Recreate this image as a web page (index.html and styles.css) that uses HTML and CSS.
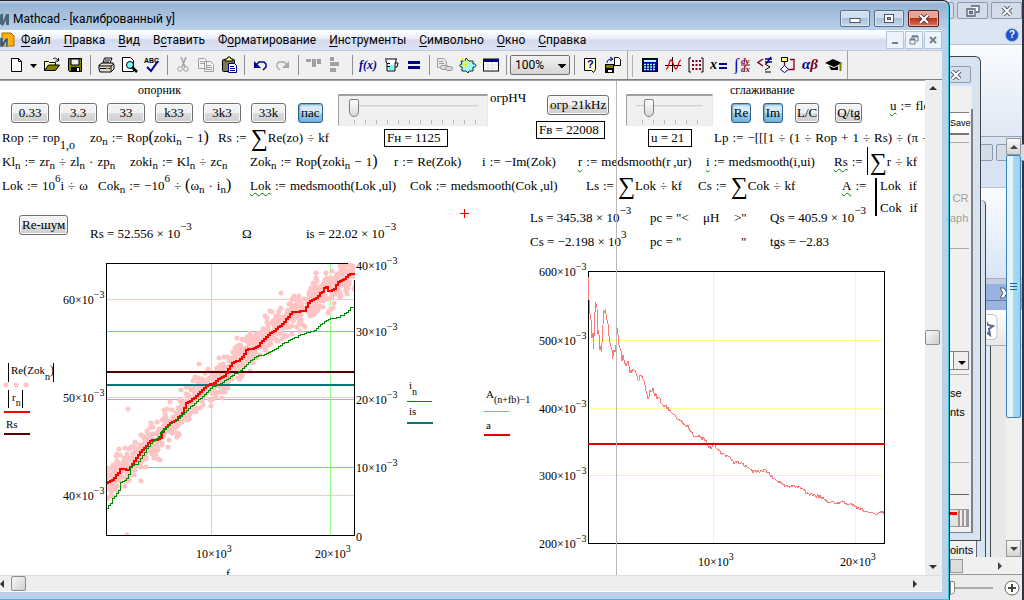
FILE: index.html
```html
<!DOCTYPE html>
<html lang="ru">
<head>
<meta charset="utf-8">
<title>Mathcad - [калиброванный y]</title>
<link rel="stylesheet" href="styles.css">
</head>
<body>
<div class="desktop">

  <section class="office" aria-label="Office">
    <div class="office-caption">
      <button class="glass-btn cut-left" aria-label="Свернуть"></button>
      <button class="glass-btn" aria-label="Восстановить"><svg width="14" height="12" viewBox="0 0 14 12"><path d="M5 1h8v6h-3M1 4h8v7H1zM3.500 6.500h3v2h-3z" fill="#fff" stroke="#555f70" stroke-width="1.300"/></svg></button>
      <button class="glass-btn" aria-label="Закрыть"><svg width="12" height="10" viewBox="0 0 12 10"><path d="M2 1l8 8M10 1l-8 8" stroke="#555f70" stroke-width="4"/><path d="M2 1l8 8M10 1l-8 8" stroke="#fff" stroke-width="2"/></svg></button>
    </div>
    <div class="office-ribbon"><button class="help-ball" aria-label="Справка">?</button></div>
    <div class="office-body"></div>
    <div class="office-mid">
      <button class="glass-btn" aria-label="Окно"></button><button class="glass-btn" aria-label="Закрыть документ"></button>
    </div>
    <div class="office-blue">
      <svg width="10" height="12" viewBox="0 0 10 12"><path d="M1 1h4l3 5-3 5H1l3-5z" fill="#fff" stroke="#4d5c78"/></svg>
    </div>
    <div class="office-star"><svg width="11" height="26" viewBox="0 0 11 26"><rect x="-8" y=".5" width="18" height="25" rx="4" fill="#fff" stroke="#c0c4c8"/><path d="M-1 7l2 4 5 1-4 3 1 6-4-3" fill="#fff" stroke="#5b6b8a" stroke-width="2"/></svg></div>
    <div class="office-page"></div>
    <div class="office-scroll">
      <button class="classic-arrow" aria-label="Вверх"><svg width="8" height="4" viewBox="0 0 8 4"><path d="M0 4l4-4 4 4z" fill="#444"/></svg></button>
      <div class="office-thumb"><i></i><i></i><i></i></div>
      <div class="office-track"></div>
      <button class="classic-arrow" aria-label="Вниз"><svg width="8" height="4" viewBox="0 0 8 4"><path d="M0 0h8L4 4z" fill="#444"/></svg></button>
    </div>
    <div class="office-hscroll"><span class="hthumb"></span><svg width="4" height="8" viewBox="0 0 4 8"><path d="M0 0l4 4-4 4z" fill="#444"/></svg></div>
    <div class="office-status"><span class="zoom-thumb"></span><span class="zoom-line"></span>
      <button class="zoom-in" aria-label="Увеличить"><svg width="16" height="16" viewBox="0 0 16 16"><circle cx="8" cy="8" r="7" fill="#fff" stroke="#666"/><path d="M4 8h8M8 4v8" stroke="#444" stroke-width="2"/></svg></button></div>
  </section>

  <section class="back-window" aria-label="Points"><span>oints</span></section>

  <section class="dialog" aria-label="Параметры">
    <button class="glass-btn dialog-close" aria-label="Закрыть"><svg width="12" height="10" viewBox="0 0 12 10"><path d="M2 1l8 8M10 1l-8 8" stroke="#555f70" stroke-width="4"/><path d="M2 1l8 8M10 1l-8 8" stroke="#fff" stroke-width="2"/></svg></button>
    <div class="dialog-top"></div>
    <div class="dialog-body">
      <button class="save">Save</button>
      <div class="faded"><span>CR</span><span>aph</span></div>
      <button class="drop" aria-label="Список"><svg width="8" height="4" viewBox="0 0 8 4"><path d="M0 0h8L4 4z"/></svg></button>
      <div class="opts"><span>se</span><span>nts</span></div>
      <div class="group"></div>
      <div class="swatch"></div>
    </div>
  </section>

  <main class="app">
    <header class="titlebar">
      <svg class="logo" width="10" height="16" viewBox="0 0 10 16"><path d="M0 13V4l3-2v8l3-7h3v11H6V9l-3 6z" fill="#4a6478"/></svg>
      <h1>Mathcad - [калиброванный y]</h1>
      <div class="caption-buttons">
        <button aria-label="Свернуть"><svg width="14" height="10" viewBox="0 0 14 10"><rect x="2" y="4.500" width="10" height="4" fill="#fff" stroke="#4b5768"/></svg></button>
        <button aria-label="Развернуть"><svg width="14" height="10" viewBox="0 0 14 10"><rect x="2.500" y=".5" width="9" height="8" fill="#fff" stroke="#4b5768"/><rect x="5.500" y="3.500" width="3" height="2" fill="#9ab" stroke="#4b5768"/></svg></button>
        <button class="close" aria-label="Закрыть"><svg width="14" height="10" viewBox="0 0 14 10"><path d="M3 1l8 8M11 1l-8 8" stroke="#5b2f2f" stroke-width="4"/><path d="M3 1l8 8M11 1l-8 8" stroke="#fff" stroke-width="2.200"/></svg></button>
      </div>
    </header>

    <nav class="menubar">
      <svg class="doc" width="15" height="16" viewBox="0 0 15 16"><path d="M2 1h9l3 3v10H2z" fill="#ffb400" stroke="#a86500"/><path d="M0 15V6l3-1v5l3-4h2v9H6v-5l-3 5z" fill="#3d566c" stroke="#b9c8d4" stroke-width=".5"/></svg>
      <a href="#"><u>Ф</u>айл</a><a href="#"><u>П</u>равка</a><a href="#"><u>В</u>ид</a><a href="#">В<u>с</u>тавить</a><a href="#">Ф<u>о</u>рматирование</a><a href="#"><u>И</u>нструменты</a><a href="#"><u>С</u>имвольно</a><a href="#"><u>О</u>кно</a><a href="#"><u>С</u>правка</a>
      <div class="mdi-buttons">
        <button aria-label="Свернуть документ"><svg width="10" height="10" viewBox="0 0 10 10"><path d="M2 8h6" stroke="#6f8294" stroke-width="2"/></svg></button>
        <button aria-label="Восстановить документ"><svg width="10" height="10" viewBox="0 0 10 10"><path d="M3 3V1h6v5H7M1 4h5v5H1z" fill="none" stroke="#6f8294"/><path d="M3 1.500h6M1 4.500h5" stroke="#6f8294" stroke-width="2"/></svg></button>
        <button aria-label="Закрыть документ"><svg width="10" height="10" viewBox="0 0 10 10"><path d="M2 2l6 6M8 2L2 8" stroke="#6f8294" stroke-width="2"/></svg></button>
      </div>
    </nav>

    <div class="toolbar">
      <button aria-label="Создать"><svg viewBox="0 0 18 18"><path d="M4.500 2.500h7l3 3v10h-10zM11.500 2.500v3h3" fill="#fff" stroke="#000"/></svg></button>
      <button class="narrow" aria-label="Шаблоны"><svg viewBox="0 0 8 18"><path d="M0 8h7L3.500 12z"/></svg></button>
      <button aria-label="Открыть"><svg viewBox="0 0 18 18"><path d="M1.500 14V5.500h4l1 1h6V9" fill="#ffff9c" stroke="#000"/><path d="M1.500 14.500l4-5.500h11l-4 5.500z" fill="#808000" stroke="#000"/><path d="M10 3c2-1.500 4-1 5 1.500M15.500 2v3h-3" fill="none" stroke="#000"/></svg></button>
      <button aria-label="Сохранить"><svg viewBox="0 0 18 18"><path d="M2.500 2.500h13v13h-12l-1-1z" fill="#808000" stroke="#000"/><path d="M5 3h8v6H5z" fill="#f0f0f0" stroke="#000"/><path d="M5 11h9v5H5z"/><path d="M11 12h2v3h-2z" fill="#fff"/></svg></button>
      <i class="sep"></i>
      <button aria-label="Печать"><svg viewBox="0 0 18 18"><path d="M6 7l1.500-5H15l-2 5" fill="#fff" stroke="#000"/><path d="M8 4h5M7 6h5" stroke="#000"/><path d="M2 9l3-2h11l1 2v4l-3 3H3l-1-3z" fill="#ddd" stroke="#000"/><path d="M2 10h12l3-2M3 12.500h10M14 10v5" fill="none" stroke="#000"/><path d="M9 12h3" stroke="#fc0"/></svg></button>
      <button aria-label="Просмотр"><svg viewBox="0 0 18 18"><path d="M2.500 1.500h8l3 3v11h-11z" fill="#fff" stroke="#000"/><circle cx="10" cy="9" r="3.500" fill="#7ff" stroke="#000"/><path d="M12 11l5 5" stroke="#000" stroke-width="2.500"/></svg></button>
      <button aria-label="Орфография"><svg viewBox="0 0 18 18"><text x="1" y="7" class="abc">ABC</text><path d="M4 11l4 4 7-10" fill="none" stroke="#000090" stroke-width="2"/></svg></button>
      <i class="sep"></i>
      <button aria-label="Вырезать"><svg viewBox="0 0 18 18"><path d="M7 1l4 10M12 1L8 11" stroke="#a0a0a0" stroke-width="1.500"/><circle cx="6" cy="13" r="2.300" fill="none" stroke="#a0a0a0"/><circle cx="12" cy="13" r="2.300" fill="none" stroke="#a0a0a0"/></svg></button>
      <button aria-label="Копировать"><svg viewBox="0 0 18 18"><path d="M1.500 2.500h6l2 2v8h-8zM7.500 5.500h6l3 3v7h-9zM3 5.500h4M3 7.500h4M9 9.500h5M9 11.500h6M9 13.500h6" fill="#f4f4f4" stroke="#a0a0a0"/></svg></button>
      <button aria-label="Вставить"><svg viewBox="0 0 18 18"><rect x="2.500" y="3.500" width="12" height="12" rx="1" fill="#7c7c50" stroke="#000"/><path d="M5 5V3h2l1-2h2l1 2h2v2z" fill="#ff8" stroke="#000"/><path d="M8.500 7.500h6l2 2v7h-8zM10 10.500h4M10 12.500h5M10 14.500h5" fill="#fff" stroke="#000090"/></svg></button>
      <i class="sep"></i>
      <button aria-label="Отменить"><svg viewBox="0 0 18 18"><path d="M5 9l3-3h5l2 2v3l-3 3" fill="none" stroke="#000090" stroke-width="1.500"/><path d="M3 5v7h7z" fill="#000090"/></svg></button>
      <button aria-label="Повторить"><svg viewBox="0 0 18 18"><path d="M13 9l-3-3H5L3 8v3l3 3" fill="none" stroke="#a8a8a8" stroke-width="1.300"/><path d="M15 5v7H8z" fill="#a8a8a8"/></svg></button>
      <i class="sep"></i>
      <button aria-label="Выровнять поперёк"><svg viewBox="0 0 18 18"><path d="M1 3h5v3H1zM7 3h4v8H7zM12 3h4v5h-4z" fill="#a0a0a0"/></svg></button>
      <button aria-label="Выровнять вниз"><svg viewBox="0 0 18 18"><path d="M2 1h4v4H2zM2 6h9v4H2zM2 12h6v4H2z" fill="#a0a0a0"/></svg></button>
      <i class="sep"></i>
      <button aria-label="Функция"><svg viewBox="0 0 18 18"><text x="0" y="13" class="fx">f(x)</text></svg></button>
      <button aria-label="Единицы"><svg viewBox="0 0 18 18"><path d="M3 3h12M4 4v2l1 1v8h8V7l1-2V3M13 7h3l-1 4h-2" fill="#fff" stroke="#000"/><path d="M6 9h6v5H6z" fill="#7ff"/><path d="M5 7.500h3M5 10.500h3" stroke="#000"/></svg></button>
      <button aria-label="Вычислить"><svg viewBox="0 0 18 18"><path d="M3 5h12v3H3zM3 10h12v3H3z" fill="#000090"/></svg></button>
      <i class="sep"></i>
      <button aria-label="Гиперссылка"><svg viewBox="0 0 18 18"><path d="M1.500 2.500h6l3 3v6h-9zM3 5.500h4M3 7.500h5" fill="#e8e8e8" stroke="#a0a0a0"/><rect x="4.500" y="9.500" width="8" height="4" rx="2" fill="#ddd" stroke="#999"/><rect x="9.500" y="10.500" width="7" height="4" rx="2" fill="#ddd" stroke="#999"/></svg></button>
      <button aria-label="Компонент"><svg viewBox="0 0 18 18"><path d="M2 5h4l1-3 3 3h4v3c4-1 4 4 0 3v4h-4l-1 2-2-2H3v-4c-3 0-3-3 0-3z" fill="#9ff" stroke="#222"/><path d="M3 2l3 4M8 4l1 4M3 8l5 1M6 12l2-3" stroke="#ffe800" stroke-width="1.500"/></svg></button>
      <button aria-label="Таблица"><svg viewBox="0 0 18 18"><rect x="1.500" y="3" width="15" height="12" fill="#fff" stroke="#000"/><path d="M1 3h16v3H1z" fill="#000090"/><path d="M2 9h14M2 12h14M6 6v8M10 6v8" stroke="#ddd"/></svg></button>
      <i class="sep"></i>
      <select class="zoom" aria-label="Масштаб"><option>100%</option></select>
      <i class="sep"></i>
      <button aria-label="Помощь"><svg viewBox="0 0 18 18"><path d="M3.500 2.500h11v11l-2 3-2-2h-7z" fill="#ffc" stroke="#000"/><text x="6" y="12" class="q">?</text></svg></button>
      <button aria-label="Ресурсы"><svg viewBox="0 0 18 18"><path d="M1 8h9v9H1z"/><path d="M2 9h7v3H2z" fill="#808000"/><path d="M4 14h4v2H4z" fill="#fff"/><path d="M10.500 1.500h4l2 2v6h-6z" fill="#fff" stroke="#000"/><path d="M3 7c0-3 2-4 5-4M6 1l3 2-3 2" fill="none" stroke="#000090"/></svg></button>
      <i class="sep grip"></i>
      <button aria-label="Калькулятор"><svg viewBox="0 0 18 18"><rect x="1.500" y="2.500" width="15" height="13" fill="#000090" stroke="#000"/><path d="M3 4h12v2H3z" fill="#aff"/><path d="M3 8.500h12M3 11h12M3 13.500h12" stroke="#aff" stroke-width="1.500" stroke-dasharray="2 1"/></svg></button>
      <button aria-label="График"><svg viewBox="0 0 18 18"><path d="M1 9.500h16M8.500 1v15" stroke="#000"/><path d="M2 13c3 0 3-9 5-9s3 9 5 9 2-8 5-9" fill="none" stroke="#e00000" stroke-width="1.300"/></svg></button>
      <button aria-label="Матрица"><svg viewBox="0 0 18 18"><path d="M4 2H2v14h2M14 2h2v14h-2" fill="none" stroke="#000"/><path d="M5 5h9M5 9h9M5 13h9" stroke="#800020" stroke-width="2" stroke-dasharray="2 1.500"/></svg></button>
      <button aria-label="Вычисление"><svg viewBox="0 0 18 18"><text x="0" y="13" class="xe">x</text><path d="M9 8h8M9 12h8" stroke="#000090" stroke-width="2"/></svg></button>
      <button aria-label="Матанализ"><svg viewBox="0 0 18 18"><text x="1" y="14" class="int">∫</text><text x="8" y="8" class="dd">dy</text><path d="M8 9h9" stroke="#800020"/><text x="8" y="16" class="dd">dx</text></svg></button>
      <button aria-label="Булева"><svg viewBox="0 0 18 18"><path d="M7 3L2 6.500 7 10" fill="none" stroke="#800020" stroke-width="1.500"/><path d="M9 3h7M9 6h7M15 1l-5 7" stroke="#000090" stroke-width="1.500"/><path d="M9 8l5 3-5 3M9 16h6" fill="none" stroke="#000"/></svg></button>
      <button aria-label="Программирование"><svg viewBox="0 0 18 18"><path d="M2.500 1.500h6v4h-6z" fill="#ff8" stroke="#000"/><path d="M5.500 6v4M9 13.500h6v-10h-4" fill="none" stroke="#800020" stroke-width="1.300"/><path d="M5.500 9.500l4 4-4 3-4-3z" fill="#fff" stroke="#000090"/></svg></button>
      <button aria-label="Греческие"><svg viewBox="0 0 18 18"><text x="0" y="13" class="ab">α<tspan fill="#800020">β</tspan></text></svg></button>
      <button aria-label="Символика"><svg viewBox="0 0 18 18"><path d="M0 7l8-4 9 4-8 4z"/><path d="M4 10l5 2 4-2v4H6z"/><path d="M15.500 7v8" stroke="#808000" stroke-width="2"/></svg></button>
      <i class="toolbar-end"></i>
    </div>

    <div class="workspace">
      <div class="sheet">
        <svg class="chart chart-left" viewBox="0 255 450 325" width="450" height="325" role="img" aria-label="Re(Zok), r, Rs">
          <g>
            <path d="M106 299.500h249M106 397.500h249M106 495.500h249" stroke="#ffc4c4"/>
            <path d="M106 331.500h249M106 399.500h249M106 467.500h249" stroke="#80b8ff"/>
            <path d="M211.500 264v272M330.500 264v272" stroke="#90ff90"/>
          </g>
          <clipPath id="plot"><rect x="106" y="263" width="249" height="273"/></clipPath>
          <g clip-path="url(#plot)">
            <g id="scatter" fill="#ffc4c4"></g>
            <path d="M106 372h249" stroke="#580000" stroke-width="2"/>
            <path d="M106 385h249" stroke="#007878" stroke-width="2"/>
            <path id="curve-r" class="crisp" fill="none" stroke="#f00" stroke-width="2"/>
            <path id="curve-i" class="crisp" fill="none" stroke="#008c00"/>
          </g>
          <path d="M106.500 263v273M106 535.500h249M354.500 280v256M106 263.500h242" stroke="#000"/>
          <g class="tick">
            <text x="63" y="304">60×10<tspan dy="-6">−3</tspan></text>
            <text x="63" y="402">50×10<tspan dy="-6">−3</tspan></text>
            <text x="63" y="500">40×10<tspan dy="-6">−3</tspan></text>
            <text x="356" y="270">40×10<tspan dy="-6">−3</tspan></text>
            <text x="356" y="336">30×10<tspan dy="-6">−3</tspan></text>
            <text x="356" y="404">20×10<tspan dy="-6">−3</tspan></text>
            <text x="356" y="472">10×10<tspan dy="-6">−3</tspan></text>
            <text x="356" y="541">0</text>
            <text x="196" y="558">10×10<tspan dy="-6">3</tspan></text>
            <text x="315" y="558">20×10<tspan dy="-6">3</tspan></text>
            <text x="226" y="578">f</text>
          </g>
          <g class="legend">
            <text x="11" y="374">Re<tspan class="lp">(</tspan>Zok<tspan dy="6">n</tspan><tspan dy="-6" class="lp">)</tspan></text>
            <path d="M8.500 363v19M53.500 363v19M8.500 390v18M22.500 390v18" stroke="#000"/>
            <g fill="#ffc4c4"><circle cx="6" cy="385" r="2.500"/><circle cx="16" cy="385" r="2.500"/><circle cx="26" cy="385" r="2.500"/></g>
            <text x="12" y="401">r<tspan dy="5">n</tspan></text>
            <path d="M4 412h26" stroke="#f00" stroke-width="2"/>
            <text x="6" y="428">Rs</text>
            <path d="M4 434h26" stroke="#580000" stroke-width="2"/>
            <text x="409" y="389">i<tspan dy="6">n</tspan></text>
            <path d="M407 401.500h25" stroke="#008c00"/>
            <text x="409" y="415">is</text>
            <path d="M407 423h26" stroke="#007878" stroke-width="2"/>
          </g>
        </svg>

        <svg class="chart chart-right" viewBox="480 255 420 325" width="420" height="325" role="img" aria-label="A, a">
          <path d="M588 340.500h297M588 408.500h297M588 475.500h297" stroke="#ffff90"/>
          <path d="M713.500 272v272M855.500 272v272" stroke="#d8ffd8"/>
          <rect x="588.500" y="271.500" width="296" height="272" fill="none" stroke="#000"/>
          <path id="curve-a" class="crisp" fill="none" stroke="#ff7878"/>
          <path d="M588 444h297" stroke="#e00000" stroke-width="2"/>
          <g class="tick">
            <text x="539" y="276">600×10<tspan dy="-6">−3</tspan></text>
            <text x="539" y="345">500×10<tspan dy="-6">−3</tspan></text>
            <text x="539" y="413">400×10<tspan dy="-6">−3</tspan></text>
            <text x="539" y="480">300×10<tspan dy="-6">−3</tspan></text>
            <text x="539" y="548">200×10<tspan dy="-6">−3</tspan></text>
            <text x="698" y="566">10×10<tspan dy="-6">3</tspan></text>
            <text x="840" y="566">20×10<tspan dy="-6">3</tspan></text>
          </g>
          <g class="legend">
            <text x="486" y="398">A<tspan dy="5">(n+fb)−1</tspan></text>
            <path d="M484 411.500h25" stroke="#ff8080"/>
            <text x="486" y="429">a</text>
            <path d="M484 435h26" stroke="#e00000" stroke-width="2"/>
          </g>
        </svg>

        <p class="region note n-op">опорник</p>
        <div class="region btn-row b-op"><button>0.33</button><button>3.3</button><button>33</button><button>k33</button><button>3k3</button><button class="short">33k</button><button class="on">пас</button></div>
        <div class="region slider s-a"><input type="range" min="0" max="100" value="1" aria-label="огрНЧ"></div>
        <p class="region n-nch">огрНЧ</p>
        <p class="region boxed x-fn">Fн = 1125</p>
        <div class="region btn-row b-21"><button>огр 21kHz</button></div>
        <p class="region boxed x-fv">Fв = 22008</p>
        <div class="region slider s-b"><input type="range" min="0" max="100" value="14" aria-label="u"></div>
        <p class="region boxed x-u">u = 21</p>
        <p class="region note n-sg">сглаживание</p>
        <div class="region btn-row b-sg"><button class="on">Re</button><button class="on">Im</button><button>L/C</button><button>Q/tg</button></div>
        <p class="region f-u"><span class="wavy">u</span><b>:=</b>flo</p>

        <p class="region row-a f-rop">Rop<b>:=</b>rop<sub class="low">1,o</sub></p>
        <p class="region row-a f-zo">zo<sub>n</sub><b>:=</b>Rop<q>(</q>zoki<sub>n</sub><b>−</b>1<q>)</q></p>
        <p class="region row-a f-rs">Rs<b>:=</b><i class="sum">∑</i>Re(zo)<b>÷</b>kf</p>
        <p class="region row-a f-lp">Lp<b>:=</b>−[[[1<b>÷</b>(1<b>÷</b>Rop<b>+</b>1<b>÷</b>Rs)<b>÷</b>(π<b>÷</b></p>

        <p class="region row-b f-kl">Kl<sub>n</sub><b>:=</b>zr<sub>n</sub><b>÷</b>zl<sub>n</sub><b>·</b>zp<sub>n</sub></p>
        <p class="region row-b f-zoki">zoki<sub>n</sub><b>:=</b>Kl<sub>n</sub><b>÷</b>zc<sub>n</sub></p>
        <p class="region row-b f-zok">Zok<sub>n</sub><b>:=</b>Rop<q>(</q>zoki<sub>n</sub><b>−</b>1<q>)</q></p>
        <p class="region row-b f-r">r<b>:=</b>Re(Zok)</p>
        <p class="region row-b f-i">i<b>:=</b>−Im(Zok)</p>
        <p class="region row-b f-mr"><span class="wavy">r</span><b>:=</b>medsmooth(r&thinsp;,ur)</p>
        <p class="region row-b f-mi"><span class="wavy">i</span><b>:=</b>medsmooth(i,ui)</p>
        <p class="region row-b f-rsk"><span class="wavy">Rs</span><b>:=</b><span class="bar"><i class="sum">∑</i>r<b>÷</b>kf</span></p>

        <p class="region row-c f-lok">Lok<b>:=</b>10<sup>6</sup>i<b>÷</b>ω</p>
        <p class="region row-c f-cok">Cok<sub>n</sub><b>:=</b>−10<sup>6</sup><b>÷</b><q>(</q>ω<sub>n</sub><b>·</b>i<sub>n</sub><q>)</q></p>
        <p class="region row-c f-zok"><span class="wavy">Lok</span><b>:=</b>medsmooth(Lok&thinsp;,ul)</p>
        <p class="region row-c f-mc">Cok<b>:=</b>medsmooth(Cok&thinsp;,ul)</p>
        <p class="region row-c f-ls">Ls<b>:=</b><i class="sum">∑</i>Lok<b>÷</b>kf</p>
        <p class="region row-c f-cs">Cs<b>:=</b><i class="sum">∑</i>Cok<b>÷</b>kf</p>
        <p class="region row-c f-a"><span class="wavy">A</span><b>:=</b></p>
        <div class="region program"><p>Lok<span>if</span></p><p>Cok<span>if</span></p></div>

        <div class="region btn-row b-noise"><button>Re-шум</button></div>
        <p class="region row-f v-rs">Rs = 52.556 × 10<sup>−3</sup></p>
        <p class="region row-f v-om">Ω</p>
        <p class="region row-f v-is">is = 22.02 × 10<sup>−3</sup></p>
        <svg class="region cross" width="9" height="9" viewBox="0 0 9 9"><path d="M0 4.500h9M4.500 0v9" stroke="#f00"/></svg>
        <p class="region row-d v-ls">Ls = 345.38 × 10<sup>−3</sup></p>
        <p class="region row-d v-pc">pc = "&lt;</p><p class="region row-d v-uh">μH</p><p class="region row-d v-gt">&gt;"</p>
        <p class="region row-d v-qs">Qs = 405.9 × 10<sup>−3</sup></p>
        <p class="region row-e v-ls">Cs = −2.198 × 10<sup>3</sup></p>
        <p class="region row-e v-pc">pc = "</p><p class="region row-e v-q">"</p>
        <p class="region row-e v-qs">tgs = −2.83</p>
        <div class="page-edge"></div>
      </div>
      <div class="vscroll"><button aria-label="Прокрутить вверх"><svg width="8" height="4" viewBox="0 0 8 4"><path d="M0 4l4-4 4 4z" fill="#333"/></svg></button><span class="gap"></span><span class="thumb"></span><span class="gap"></span><button aria-label="Прокрутить вниз"><svg width="8" height="4" viewBox="0 0 8 4"><path d="M0 0h8L4 4z" fill="#333"/></svg></button></div>
    </div>
    <div class="hscroll"><button aria-label="Прокрутить влево"><svg width="4" height="8" viewBox="0 0 4 8"><path d="M4 0L0 4l4 4z" fill="#333"/></svg></button><span class="thumb"></span><span class="gap"></span><button aria-label="Прокрутить вправо"><svg width="4" height="8" viewBox="0 0 4 8"><path d="M0 0l4 4-4 4z" fill="#333"/></svg></button></div>
  </main>
</div>
<script src="charts.js"></script>
</body>
</html>
```
FILE: styles.css
```css
* { box-sizing: border-box; }
body { margin: 0; font: 12px/16px Roboto, "Noto Sans", sans-serif; color: #000; }
p, h1 { margin: 0; }
button { font: inherit; color: inherit; padding: 0; margin: 0; }
a { color: inherit; text-decoration: none; }
.desktop { position: relative; height: 100vh; overflow: hidden; background: #e8e8e8; }

/* Mathcad window */
.app { position: absolute; inset: 0 74px 0 0; display: flex; flex-direction: column; background: #b9d1ea;
  border-top: 1px solid #223; border-right: 1px solid #103040; border-radius: 0 7px 0 0; padding: 0 7px 8px 0;
  box-shadow: inset -1px -1px 0 #2cc8e0; }
.titlebar { display: flex; align-items: center; height: 29px; flex: none; margin-right: -6px; padding-top: 6px;
  background: linear-gradient(#c8d8e8 0, #98b4d4 3px, #b9d1ea 100%); border-radius: 0 6px 0 0; }
.titlebar h1 { font-size: 12px; font-weight: 400; margin-left: 3px; }
.caption-buttons { display: flex; gap: 4px; margin-left: auto; margin-right: 9px; align-self: flex-start; margin-top: 3px; }
.caption-buttons button { width: 30px; height: 17px; border: 1px solid #5c6f86; border-radius: 2px; display: grid; place-items: center;
  background: linear-gradient(#d0deed 0 48%, #a9c0d9 50%, #c3d6ea); box-shadow: inset 0 0 0 1px #dce8f4; }
.caption-buttons .close { width: 31px; background: linear-gradient(#e6a496 0 45%, #b8321c 50%, #d5755c); border-color: #5a1b1b; box-shadow: inset 0 0 0 1px #e8b0a4; }
.menubar { display: flex; align-items: center; height: 20px; flex: none; background: linear-gradient(#fff, #eef1fa 40%, #d5dbee 50%, #dde3f4); }
.menubar .doc { margin-right: -1px; }
.menubar a { padding: 0 6px 0 7px; }
.menubar u { text-underline-offset: 2px; }
.mdi-buttons { display: flex; margin-left: auto; gap: 1px; }
.mdi-buttons button { width: 18px; height: 18px; border: 1px solid #b4c6da; background: #eef3fa; display: grid; place-items: center; }
.toolbar { display: flex; align-items: center; height: 30px; flex: none; padding-left: 4px; background: #f0f0f0;
  border-top: 1px solid #c4c8d4; border-bottom: 1px solid #808080; }
.toolbar button { width: 23px; height: 24px; border: 0; background: none; display: grid; place-items: center; flex: none; }
.toolbar .narrow { width: 13px; }
.toolbar button svg { width: 18px; height: 18px; }
.toolbar .narrow svg { width: 8px; }
.sep { width: 8px; height: 20px; flex: none; background: linear-gradient(#909090, #909090) center / 1px 100% no-repeat; }
.grip { width: 14px; height: 28px; background: linear-gradient(#a0a0a0, #a0a0a0) 3px 0 / 1px 100% no-repeat, linear-gradient(#b0b0b0, #b0b0b0) 8px 4px / 1px 22px no-repeat; }
.toolbar-end { width: 3px; height: 28px; border-right: 1px solid #a0a0a0; }
.zoom { width: 60px; height: 20px; flex: none; appearance: none; border: 1px solid #707070; border-radius: 2px; padding: 0 4px; font: inherit;
  background: linear-gradient(to top right, transparent 50%, #000 50%) 47px 8px / 4px 4px no-repeat,
    linear-gradient(to top left, transparent 50%, #000 50%) 51px 8px / 4px 4px no-repeat,
    linear-gradient(#f2f2f2, #d4d4d4); }
.abc { font: bold 7px "Liberation Sans", sans-serif; }
.fx { font: italic bold 12px "Liberation Serif", serif; fill: #000090; }
.q { font: bold 11px "Liberation Sans", sans-serif; fill: #000090; }
.xe { font: italic bold 14px "Liberation Serif", serif; }
.int { font: bold 17px "Liberation Serif", serif; fill: #000090; }
.dd { font: italic bold 9px "Liberation Serif", serif; fill: #800020; }
.ab { font: italic bold 15px "Liberation Serif", serif; fill: #000090; }

/* Worksheet: regions sit where the author dropped them */
.workspace { display: flex; flex: 1; min-height: 0; }
.sheet { position: relative; flex: 1; overflow: hidden; background: #fff; border-top: 1px solid #a0a0a0; font: 13px/16px "Liberation Serif", serif; }
.region { position: absolute; white-space: nowrap; }
.region b { font-weight: 400; margin: 0 4px; }
.region sub, .region sup { font-size: 11px; line-height: 0; }
.region sub { vertical-align: -3px; }
.region .low { vertical-align: -7px; font-size: 12px; }
.region sup { vertical-align: 8px; }
.region q { font-size: 16px; line-height: 0; quotes: none; }
.region q::before, .region q::after { content: none; }
.sum { font-style: normal; font-size: 24px; line-height: 0; vertical-align: -4px; }
.wavy { text-decoration: underline wavy #008000 1px; text-underline-offset: 2px; }
.bar { border-left: 1px solid #000; padding: 7px 0 6px 2px; }
.note { font-size: 12px; }
.row-a { top: 49px; } .row-b { top: 73px; } .row-c { top: 97px; }
.row-d { top: 129px; } .row-e { top: 153px; } .row-f { top: 145px; }
.n-op { left: 138px; top: 1px; } .n-sg { left: 730px; top: 1px; } .n-nch { left: 490px; top: 9px; }
.b-op { left: 11px; top: 22px; } .b-21 { left: 547px; top: 14px; } .b-sg { left: 731px; top: 22px; } .b-noise { left: 19px; top: 134px; }
.btn-row { display: flex; gap: 10px; }
.btn-row button { min-width: 38px; height: 20px; padding: 0 4px; border: 1px solid #707070; border-radius: 3px; font: 13px/16px "Liberation Serif", serif;
  background: linear-gradient(#f2f2f2 0 48%, #dcdcdc 50%, #cfcfcf); box-shadow: inset 0 0 0 1px #fafafa; }
.btn-row .short { min-width: 35px; }
.btn-row .on { min-width: 24px; padding: 0 2px; margin-left: 2px; border-color: #2c628b; background: linear-gradient(#d8ecf8 0 48%, #a4cfe8 50%, #6fb2dc); box-shadow: inset 1px 1px 2px #6a9ec0; }
.b-21 button, .b-noise button { padding: 0 2px; }
.b-sg { gap: 12px; }
.b-sg button, .b-sg .on { min-width: 20px; padding: 0 1px; margin: 0; }
.b-sg button:last-child { margin-left: 4px; }
.s-a { left: 338px; top: 13px; width: 150px; } .s-b { left: 626px; top: 13px; width: 87px; }
.slider { height: 32px; border-top: 2px solid #a0a0a0; border-left: 1px solid #a0a0a0; border-right: 1px solid #e8e8e8; border-bottom: 1px solid #e8e8e8;
  background: repeating-linear-gradient(90deg, #b8b8b8 0 1px, transparent 1px 11px) 15px 24px / calc(100% - 26px) 4px no-repeat, #f0f0f0; }
.slider input { appearance: none; width: calc(100% - 18px); height: 20px; margin: 2px 9px; display: block; background: linear-gradient(#c8c8c8, #fff) center 7px / 100% 3px no-repeat; }
.slider input::-webkit-slider-thumb { appearance: none; width: 10px; height: 18px; border: 1px solid #808080; border-radius: 2px 2px 5px 5px; background: linear-gradient(#fff, #d8d8d8); }
.boxed { border: 1px solid #000; padding: 0 2px; }
.x-fn { left: 384px; top: 48px; width: 64px; } .x-fv { left: 536px; top: 40px; width: 69px; } .x-u { left: 648px; top: 48px; width: 44px; }
.f-u { left: 890px; top: 17px; }
.f-rop { left: 2px; } .f-zo { left: 90px; } .f-rs { left: 218px; } .f-lp { left: 714px; }
.f-kl { left: 2px; } .f-zoki { left: 130px; } .f-zok { left: 250px; } .f-r { left: 394px; } .f-i { left: 482px; }
.f-mr { left: 578px; } .f-mi { left: 706px; } .f-rsk { left: 834px; }
.f-lok { left: 2px; } .f-cok { left: 98px; } .f-mc { left: 410px; } .f-ls { left: 586px; } .f-cs { left: 698px; } .f-a { left: 842px; }
.program { left: 875px; top: 97px; border-left: 2px solid #000; padding-left: 3px; display: grid; gap: 6px; }
.program span { margin-left: 8px; }
.v-rs { left: 90px; } .v-om { left: 242px; } .v-is { left: 306px; }
.v-ls { left: 530px; } .v-pc { left: 650px; } .v-uh { left: 703px; } .v-gt { left: 734px; } .v-q { left: 741px; } .v-qs { left: 770px; }
.cross { left: 460px; top: 128px; }
.page-edge { position: absolute; left: 616px; top: 0; bottom: 0; width: 1px; background: #b8b8b8; }
.chart { position: absolute; top: 174px; }
.chart-left { left: 0; } .chart-right { left: 480px; }
.crisp { shape-rendering: crispEdges; }
.tick { font-size: 12px; } .tick tspan { font-size: 10px; }
.legend { font-size: 11px; } .legend tspan { font-size: 10px; } .legend .lp { font-size: 12px; }

.vscroll { width: 17px; display: flex; flex-direction: column; background: #eee; }
.vscroll button, .hscroll button { border: 0; background: none; width: 16px; height: 16px; display: grid; place-items: center; flex: none; }
.gap { flex: 1; }
.thumb { width: 15px; height: 15px; border: 1px solid #8c8c8c; border-radius: 2px; background: linear-gradient(135deg, #f8f8f8, #cfcfcf); flex: none; }
.vscroll .thumb { margin: 0 auto 0 0; }
.vscroll .gap:first-of-type { flex: 232; }
.vscroll .gap:last-of-type { flex: 212; }
.hscroll { display: flex; align-items: center; height: 17px; flex: none; padding-right: 19px; background: #eee; border-top: 1px solid #ddd; border-bottom: 1px solid #fff; }
.hscroll button:first-child { width: 11px; place-items: center start; }

/* Windows behind */
.office, .dialog, .back-window { position: absolute; }
.glass-btn { width: 31px; height: 17px; border: 1px solid #8d99b0; border-radius: 2px; background: #d3dce9; display: grid; place-items: center; flex: none; }
.office { inset: 0 0 0 auto; width: 74px; display: flex; flex-direction: column; background: #dfe9f5; border-right: 2px solid #334; }
.office-caption { display: flex; justify-content: flex-end; gap: 3px; height: 19px; padding: 2px 0; background: #ccd6e4; flex: none; }
.cut-left { width: 20px; }
.office-ribbon { height: 26px; background: #dce6f3; border-bottom: 1px solid #b4c0d2; text-align: right; flex: none; padding: 7px 3px; }
.help-ball { width: 14px; height: 14px; border: 1px solid #a8bce0; border-radius: 50%; background: #1c55c8; color: #fff; font: bold 10px/12px "Liberation Sans", sans-serif; }
.office-body { height: 92px; flex: none; background: linear-gradient(#fafcff, #dfe8f4); border-bottom: 1px solid #99a4b8; }
.office-mid { height: 51px; flex: none; display: flex; gap: 3px; padding: 7px 0 0 12px; background: #d9e3f1; border-bottom: 1px solid #b4c4d8; }
.office-blue { height: 122px; flex: none; padding: 0 13px 11px 0; display: flex; justify-content: flex-end; align-items: flex-end;
  background: linear-gradient(#fafcff 0, #d9e6f6 90px, #a4acc0 90px 91px, #c4cee0 91px 96px, #9ab2de 96px 112px, #667ca8 112px 113px, #9ab4e2 113px); }
.office-star { height: 36px; flex: none; padding: 4px 0 0 37px; background: linear-gradient(#fff, #e8e8e8); border-bottom: 1px solid #a8acb4; }
.office-page { flex: 1; background: linear-gradient(90deg, #dbe8f6 40px, #444 40px 41px, #e8e8e8 41px); }
.office-scroll { position: absolute; right: 1px; top: 138px; bottom: 43px; width: 15px; display: flex; flex-direction: column; background: #f0f0f0; }
.classic-arrow { height: 17px; border: 1px solid #999; background: linear-gradient(#f8f8f8, #d4d4d4); display: grid; place-items: center; flex: none; }
.office-thumb { flex: 262; border: 1px solid #3c7fb1; border-radius: 2px; background: linear-gradient(90deg, #e4f4fc 45%, #a6daf4 50%, #9ad4f2); display: flex; flex-direction: column; gap: 2px; align-items: center; justify-content: center; }
.office-thumb i { width: 7px; height: 1px; background: #28648c; }
.office-track { flex: 123; }
.office-hscroll { display: flex; justify-content: space-between; align-items: center; height: 17px; flex: none; padding-right: 20px; background: #f0f0f0; }
.hthumb { width: 13px; height: 14px; border: 1px solid #999; background: #ddd; }
.office-status { display: flex; align-items: center; height: 26px; flex: none; padding-right: 2px; background: #ececec; border-top: 1px solid #999; }
.zoom-thumb { width: 5px; height: 14px; border: 1px solid #888; border-radius: 0 2px 5px 0; background: #fff; }
.zoom-line { width: 38px; height: 2px; background: #aaa; }
.zoom-in { border: 0; background: none; margin-left: auto; display: grid; }
.back-window { right: 38px; bottom: 43px; width: 36px; top: 200px; border-right: 1px solid #445; border-radius: 0 5px 0 0; background: linear-gradient(90deg, #f0f0f0 26px, #667 26px 27px, #d6e4f2 27px); }
.back-window span { position: absolute; left: 0; bottom: 0; font: 11px/14px "Liberation Sans", sans-serif; }
.dialog { right: 43px; top: 56px; bottom: 59px; width: 31px; overflow: hidden; padding-right: 8px; background: #d6e4f2; border: 1px solid #444; border-left: 0; border-radius: 0 6px 0 0; display: flex; flex-direction: column; font: 11px/16px "Liberation Sans", sans-serif; }
.dialog-close { width: 21px; margin-top: 9px; place-items: center start; border-left: 0; }
.dialog-top { height: 23px; margin-top: 3px; flex: none; background: #f0f0f0; }
.dialog-body { flex: 1; background: #f0f0f0; border-right: 2px solid #808080; border-bottom: 1px solid #808080; padding-right: 2px; margin-bottom: 7px; margin-right: -1px; }
.dialog-body > * { display: block; }
.save { width: 100%; height: 23px; margin-top: 3px; border: 0; border-top: 1px solid #808080; border-bottom: 2px solid #777; background: #fff; font-size: 9px; text-align: left; }
.faded { margin-top: 7px; height: 107px; border-top: 1px solid #aaa; border-bottom: 1px solid #aaa; padding-top: 47px; color: #a0a0a0; display: grid; gap: 4px; align-content: start; }
.faded span { text-align: right; padding-right: 3px; }
.drop { width: 100%; height: 19px; margin-top: 102px; padding-left: 6px; border: 1px solid #808080; border-left: 0; background: linear-gradient(90deg, #fff 3px, #808080 3px 4px, #eee 4px); }
.opts { margin-top: 4px; border-top: 1px solid #aaa; padding-top: 10px; display: grid; gap: 3px; height: 88px; align-content: start; }
.group { height: 33px; border-top: 1px solid #aaa; border-bottom: 1px solid #666; }
.swatch { margin-top: 14px; height: 18px; border: 1px solid #999; border-left: 0; background: linear-gradient(#f00, #f00) 0 2px / 7px 3px no-repeat, linear-gradient(#e4e4e4, #e4e4e4) 0 0 / 8px 100% no-repeat, repeating-linear-gradient(90deg, #999 0 2px, #eee 2px 4px); }
```
FILE: charts.js
```js
let seed = 7;
function rnd() {
  seed = (seed * 1664525 + 1013904223) % 4294967296;
  return seed / 4294967296;
}
const parse = s => s.trim().split(/\s+/).map(p => p.split(",").map(Number));

const r = parse(`106,483 112,480 118,473 120,469 128,470 133,462 139,453 145,447 150,441 155,440 160,438 161,433
  166,427 171,423 174,421 177,419 182,413 186,403 190,401 197,395 200,392 206,386 212,384 218,379 225,376 227,370
  233,362 241,359 246,350 257,347 265,337 274,331 284,322 292,312 304,311 308,303 315,298 322,292 325,286 328,291
  333,290 338,282 345,278 350,274 355,274`);
const im = parse(`106,508 110,503 113,496 117,493 120,482 127,478 130,467 137,463 145,450 151,442 157,438 160,432
  170,423 177,419 185,411 193,404 203,395 211,387 221,383 232,375 240,370 248,362 256,356 266,353 275,349 282,343
  291,339 300,334 312,331 320,324 329,318 338,317 346,312 350,307 355,306`);
const a = parse(`588.5,277 589,300 590,314 591,320 592,338 593,333 593.5,349 594.5,325 595,312 595.5,302 597,308
  597.5,334 598.5,330 599.5,340 600,350 601,346 601.5,352 602.5,334 603,325 603.500,311 605,313 605.5,309 606.5,318
  608,324 609,336 610,343 612,350 612.5,359 614,350 615,352 616,345 617,328 618,335 619,345 621,351 622,361 623,355
  624,360 626,367 628,362 630,372 631,368 632,373 634,369 637,374 638,382 640,374 642,377 645,386 647,396 649,400
  650,388 653,391 657,397 661,401 663,408 666,405 670,411 675,416 680,421 688,426 691,432 695,437 699,437 706,440
  708,446 711,448 714,444 718,450 724,455 729,457 734,462 741,463 746,466 753,471 758,471 760,472 764,470 769,473
  774,479 782,484 788,487 794,486 800,488 807,493 815,496 820,496 826,500 833,503 843,502 851,504 856,507 865,511
  876,515 880,512 884,513`);

function at(pts, x) {
  for (let k = 1; k < pts.length; k++) {
    if (x <= pts[k][0]) {
      const [x0, y0] = pts[k - 1], [x1, y1] = pts[k];
      return y0 + (y1 - y0) * (x - x0) / (x1 - x0);
    }
  }
  return pts[pts.length - 1][1];
}

// Stepped trace: hold each sampled level, then jump to the next
function steps(pts, step, shift) {
  let d = "M" + pts[0].join(" ");
  for (let x = pts[0][0] + step; x <= 356; x += step) {
    d += "H" + (x + shift) + "V" + (Math.round(at(pts, x) + rnd() - 0.5) + shift);
  }
  return d;
}
document.getElementById("curve-r").setAttribute("d", steps(r, 2, 0));
document.getElementById("curve-i").setAttribute("d", steps(im, 2, 0.5));

let d = "M" + a.filter(p => p[0] < 625).map(p => p.join(" ")).join("L");
for (let x = 625; x <= 884; x++) {
  d += "L" + x + " " + (at(a, x) + (rnd() - 0.5) * (x < 670 ? 6 : 3)).toFixed(1);
}
document.getElementById("curve-a").setAttribute("d", d);

const dots = parse(`128,409 157,422 281,293 270,311 316,278 250,333 219,358 199,364 198,378 116,456 141,481
  127,535 160,460 154,458 168,447 242,374 347,294 125,486 148,434 129,449`);
for (let k = 0; k < 1000; k++) {
  const x = 106 + rnd() * 249;
  const spread = (rnd() + rnd() + rnd() - 1.5) * 18;
  dots.push([Math.round(x), Math.round(at(r, x) + spread)]);
}
document.getElementById("scatter").innerHTML =
  dots.map(([x, y]) => `<circle cx="${x}" cy="${y}" r="2.5"/>`).join("");
```
